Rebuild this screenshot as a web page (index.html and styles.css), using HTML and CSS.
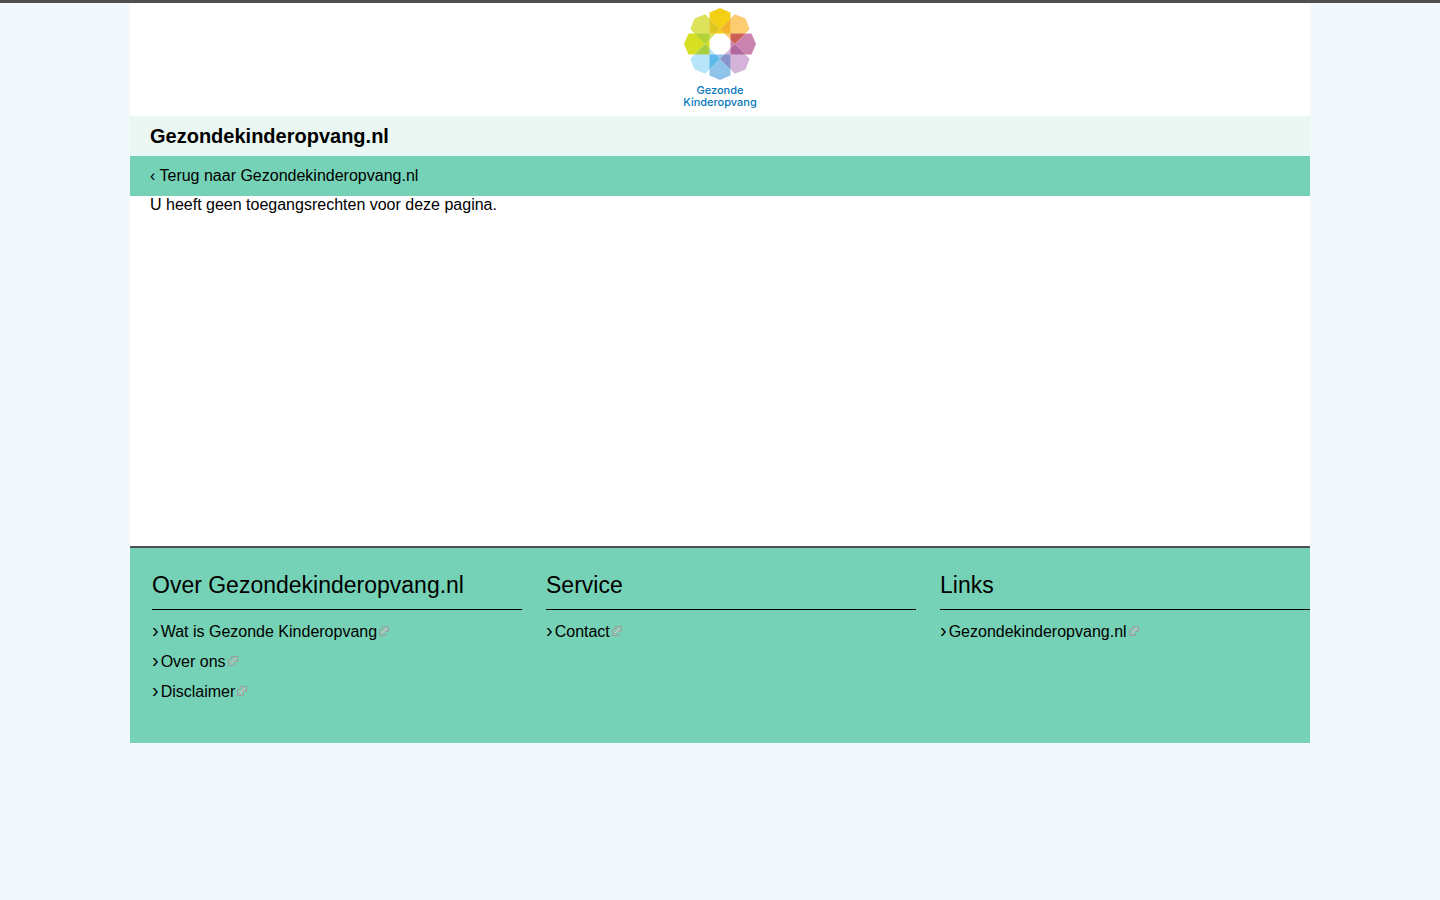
FILE: index.html
```html
<!DOCTYPE html>
<html lang="nl">
<head>
<meta charset="utf-8">
<meta name="viewport" content="width=device-width, initial-scale=1">
<title>Gezondekinderopvang.nl</title>
<link rel="stylesheet" href="styles.css">
</head>
<body>
<svg class="defs" width="0" height="0" aria-hidden="true">
  <defs>
    <path id="petal" d="M0-36 10.5-31.5V-10.5H-10.5V-31.5Z"/>
    <path id="overlap" d="M0-14.85 10.5-25.35V-10.5H4.35Z"/>
    <symbol id="external" viewBox="0 0 10 10">
      <path d="M3 3.5H.5v6h6V7M3.5 3V.5h6v5H7" fill="none" stroke="#a39a9c"/>
      <path d="M5 2h3v2H7v1H6v1H5v1H4v1H2V6h1V5h1V4h1z" fill="#a5b0ab"/>
      <path d="M6 3h1v1H6zM5 4h1v1H5zM4 5h1v1H4zM3 6h1v1H3zM7 2h1v1H7z" fill="#d8d5d6"/>
    </symbol>
  </defs>
</svg>
<div class="page">
  <header>
    <div class="brand">
      <svg class="logo" viewBox="0 0 72 102" role="img" aria-label="Gezonde Kinderopvang">
        <g transform="translate(36 36)">
          <use href="#petal" fill="#f3d013"/>
          <use href="#petal" fill="#cb84b0" transform="rotate(90)"/>
          <use href="#petal" fill="#91c4eb" transform="rotate(180)"/>
          <use href="#petal" fill="#d6df22" transform="rotate(270)"/>
          <use href="#petal" fill="#fdcc70" transform="rotate(45)"/>
          <use href="#petal" fill="#d3b3d7" transform="rotate(135)"/>
          <use href="#petal" fill="#b9e5fb" transform="rotate(225)"/>
          <use href="#petal" fill="#dce35b" transform="rotate(315)"/>
          <g class="overlaps">
            <use href="#overlap" fill="#f2b229"/>
            <use href="#overlap" fill="#dfc621" transform="scale(-1 1)"/>
            <use href="#overlap" fill="#cd6056" transform="rotate(90) scale(-1 1)"/>
            <use href="#overlap" fill="#b168a1" transform="rotate(90)"/>
            <use href="#overlap" fill="#8792ca" transform="rotate(180) scale(-1 1)"/>
            <use href="#overlap" fill="#5db9e9" transform="rotate(180)"/>
            <use href="#overlap" fill="#a7cf3f" transform="rotate(270) scale(-1 1)"/>
            <use href="#overlap" fill="#b2d235" transform="rotate(270)"/>
          </g>
        </g>
        <text x="36" y="86" class="logo-text">Gezonde</text>
        <text x="36" y="98" class="logo-text">Kinderopvang</text>
      </svg>
    </div>
    <h1 class="site-title">Gezondekinderopvang.nl</h1>
    <nav class="back"><a href="#">‹ Terug naar Gezondekinderopvang.nl</a></nav>
  </header>
  <main class="content"><p>U heeft geen toegangsrechten voor deze pagina.</p></main>
  <footer class="footer">
    <section>
      <h2>Over Gezondekinderopvang.nl</h2>
      <ul>
        <li><a href="#">Wat is Gezonde Kinderopvang<svg class="ext" aria-hidden="true"><use href="#external"/></svg></a></li>
        <li><a href="#">Over ons<svg class="ext" aria-hidden="true"><use href="#external"/></svg></a></li>
        <li><a href="#">Disclaimer<svg class="ext" aria-hidden="true"><use href="#external"/></svg></a></li>
      </ul>
    </section>
    <section>
      <h2>Service</h2>
      <ul>
        <li><a href="#">Contact<svg class="ext" aria-hidden="true"><use href="#external"/></svg></a></li>
      </ul>
    </section>
    <section>
      <h2>Links</h2>
      <ul>
        <li><a href="#">Gezondekinderopvang.nl<svg class="ext" aria-hidden="true"><use href="#external"/></svg></a></li>
      </ul>
    </section>
  </footer>
</div>
</body>
</html>
```
FILE: styles.css
```css
* { box-sizing: border-box; }

body {
  margin: 0;
  border-top: 3px solid #504e4f;
  background: #f3f8fc;
  color: #000;
  font: 16px/18px "Liberation Sans", Arial, sans-serif;
}

h1, h2, p, ul { margin: 0; padding: 0; }
ul { list-style: none; }
a { color: inherit; text-decoration: none; }
a:hover { text-decoration: underline; }

.defs { position: absolute; }

.page {
  max-width: 1180px;
  margin: 0 auto;
  background: #fff;
}

.brand {
  display: flex;
  justify-content: center;
  padding: 5px 0 6px;
}

.logo {
  display: block;
  width: 72px;
  height: 102px;
  overflow: visible;
}

.overlaps { stroke: #fff; stroke-opacity: .2; stroke-width: .5; }

.logo-text {
  fill: #0578bb;
  font: 500 11px Inter, sans-serif;
  text-anchor: middle;
}

.site-title {
  padding: 0 20px;
  background: #eaf7f3;
  font-size: 20px;
  line-height: 40px;
}

.back {
  padding: 0 20px;
  background: #76d2b6;
  line-height: 40px;
}

.content {
  min-height: 350px;
  padding: 0 20px;
}

.footer {
  display: grid;
  grid-template-columns: repeat(3, 1fr);
  gap: 24px;
  padding: 20px 0 37px 22px;
  border-top: 2px solid #4f4f4f;
  background: #76d2b6;
}

.footer h2 {
  margin-bottom: 6px;
  padding-bottom: 7px;
  border-bottom: 1px solid #000;
  font-size: 23px;
  font-weight: 400;
  line-height: 34px;
}

.footer li {
  display: flex;
  align-items: center;
  gap: 2px;
  height: 30px;
  padding-top: 2px;
}

.footer li::before {
  content: "›";
  padding-bottom: 4px;
  font-size: 20px;
}

.footer li a {
  display: flex;
  align-items: center;
  gap: 2px;
}

.ext {
  width: 10px;
  height: 12px;
  padding-bottom: 2px;
}
```
